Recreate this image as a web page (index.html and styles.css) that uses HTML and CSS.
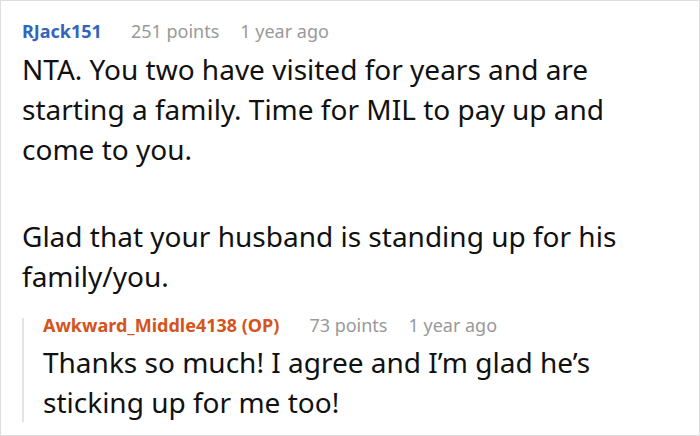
FILE: index.html
```html
<!DOCTYPE html>
<html>
<head>
<meta charset="utf-8">
<link rel="stylesheet" href="styles.css">
</head>
<body>
<div class="thread">
  <div class="comment">
    <div class="meta">
      <span class="author">RJack151</span>
      <span class="info">251 points</span>
      <span class="info">1 year ago</span>
    </div>
    <div class="body">
      <p>NTA. You two have visited for years and are starting a family. Time for MIL to pay up and come to you.</p>
      <p>Glad that your husband is standing up for his family/you.</p>
    </div>
    <div class="reply">
      <div class="meta">
        <span class="author op">Awkward_Middle4138 (OP)</span>
        <span class="info">73 points</span>
        <span class="info">1 year ago</span>
      </div>
      <div class="body">
        <p>Thanks so much! I agree and I’m glad he’s sticking up for me too!</p>
      </div>
    </div>
  </div>
</div>
</body>
</html>
```

FILE: styles.css
```css
html, body {
  margin: 0;
  padding: 0;
  background: #ffffff;
}
.thread {
  width: 700px;
  height: 436px;
  box-sizing: border-box;
  border: 1px solid #dedede;
  overflow: hidden;
  font-family: "Noto Sans", "Open Sans", sans-serif;
}
.comment {
  padding: 18px 50px 0 21px;
}
.meta {
  display: flex;
  gap: 21px;
  font-size: 18px;
  line-height: 24px;
  height: 24px;
  white-space: nowrap;
}
.author {
  font-weight: 700;
  color: #3366b8;
  margin-right: 8px;
}
.author.op {
  color: #d4541c;
  margin-right: 9px;
}
.info {
  color: #999999;
}
.body {
  margin-top: 6px;
  font-size: 28px;
  line-height: 40px;
  color: #111111;
}
.body p {
  margin: 0 0 47px 0;
}
.body p:last-child {
  margin-bottom: 0;
}
.reply {
  margin-top: 22px;
  border-left: 2px solid #e4e4e4;
  padding-left: 19px;
}
.reply .meta {
  line-height: 14px;
  height: 14px;
}
.reply .body {
  margin-top: 10px;
}
```
